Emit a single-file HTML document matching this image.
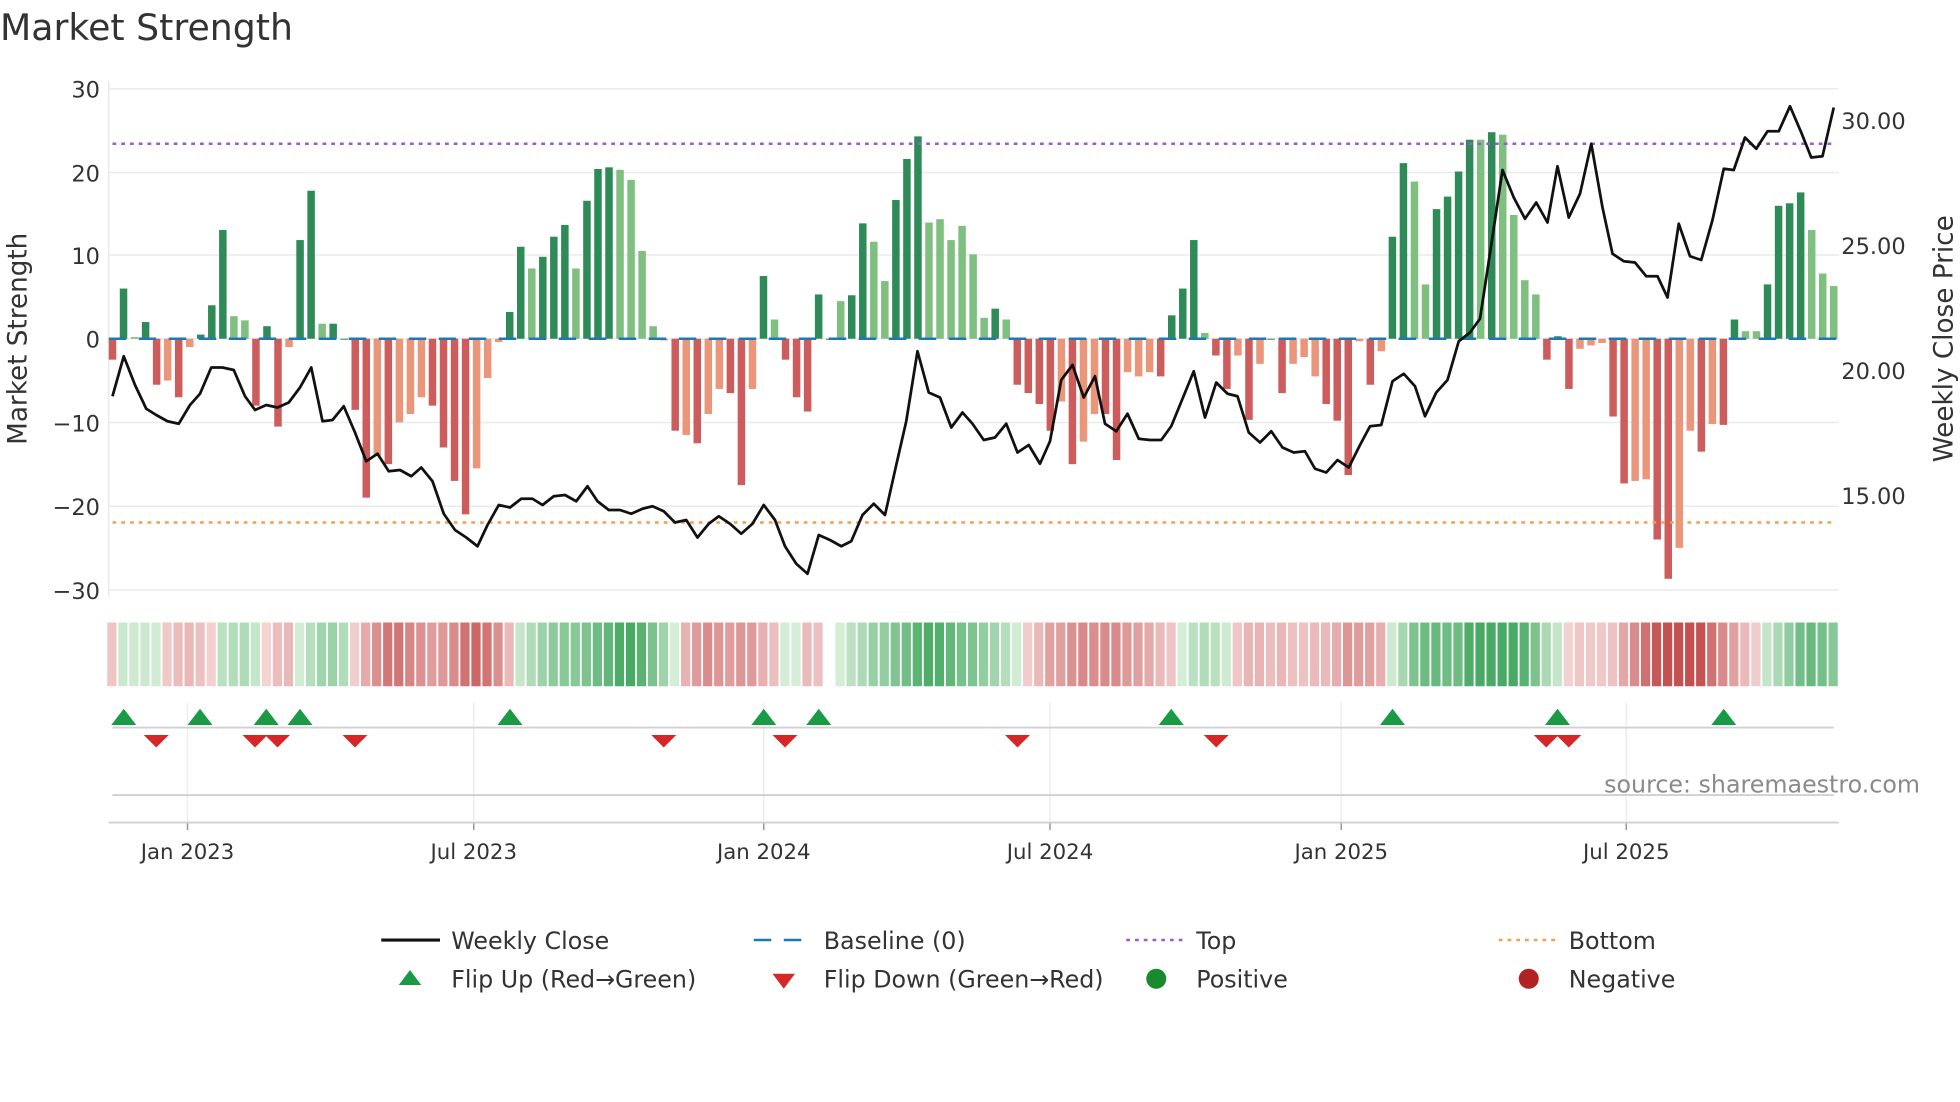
<!DOCTYPE html>
<html><head><meta charset="utf-8"><style>
html,body{margin:0;padding:0;background:#fff;width:1960px;height:1102px;overflow:hidden}
svg{display:block;font-family:"DejaVu Sans","Liberation Sans",sans-serif}
</style></head><body>
<svg id="s" width="1960" height="1102" viewBox="0 0 1568 881.6" xmlns="http://www.w3.org/2000/svg">
<text x="0" y="32" font-size="29" fill="#333">Market Strength</text>
<g id="grid" stroke="#ebebef" stroke-width="1.2"></g>
<line x1="87" y1="65" x2="87" y2="478" stroke="#e4e4e8"/>
<g font-size="18" fill="#333" text-anchor="end">
<text x="80" y="78">30</text><text x="80" y="145">20</text><text x="80" y="211">10</text><text x="80" y="278">0</text>
<text x="80" y="345">−10</text><text x="80" y="412">−20</text><text x="80" y="479">−30</text></g>
<g font-size="18" fill="#333">
<text x="1473" y="103">30.00</text><text x="1473" y="203">25.00</text><text x="1473" y="303">20.00</text><text x="1473" y="403">15.00</text></g>
<text transform="translate(21,271) rotate(-90)" font-size="21" fill="#333" text-anchor="middle">Market Strength</text>
<text transform="translate(1562,271) rotate(-90)" font-size="21" fill="#333" text-anchor="middle">Weekly Close Price</text>
<g id="bars"></g>
<line x1="87" y1="271" x2="1471" y2="271" stroke="#1f77b4" stroke-width="2" stroke-dasharray="14,10"/>
<line x1="90" y1="115" x2="1468" y2="115" stroke="#9b59d6" stroke-width="2" stroke-dasharray="3,4"/>
<line x1="90" y1="418" x2="1468" y2="418" stroke="#f0a050" stroke-width="2" stroke-dasharray="3,4"/>
<polyline id="price" fill="none" stroke="#111" stroke-width="2.2" stroke-linejoin="round"/>
<g id="heat"></g>
<g id="vgrid" stroke="#eceef2" stroke-width="1.2"></g>
<line x1="90" y1="582" x2="1467" y2="582" stroke="#d0d0d0" stroke-width="1.5"/>
<line x1="90" y1="636" x2="1467" y2="636" stroke="#d0d0d0" stroke-width="1.5"/>
<line x1="87" y1="658" x2="1471" y2="658" stroke="#d0d0d0" stroke-width="1.5"/>
<g id="marks"></g>
<text x="1536" y="634" font-size="19" fill="#8a8a8a" text-anchor="end">source: sharemaestro.com</text>
<g font-size="17" fill="#333" text-anchor="middle">
<text x="150" y="687">Jan 2023</text><text x="379" y="687">Jul 2023</text><text x="611" y="687">Jan 2024</text>
<text x="840" y="687">Jul 2024</text><text x="1073" y="687">Jan 2025</text><text x="1301" y="687">Jul 2025</text></g>
<g font-size="19" fill="#333">
<line x1="305" y1="752" x2="352" y2="752" stroke="#111" stroke-width="2.5"/><text x="361" y="759">Weekly Close</text>
<line x1="603" y1="752" x2="649" y2="752" stroke="#1f77b4" stroke-width="2" stroke-dasharray="14,10"/><text x="659" y="759">Baseline (0)</text>
<line x1="901" y1="752" x2="947" y2="752" stroke="#9b59d6" stroke-width="2" stroke-dasharray="3,4"/><text x="957" y="759">Top</text>
<line x1="1199" y1="752" x2="1245" y2="752" stroke="#f0a050" stroke-width="2" stroke-dasharray="3,4"/><text x="1255" y="759">Bottom</text>
<polygon points="319,788 337,788 328,776" fill="#1a9a45"/><text x="361" y="790">Flip Up (Red→Green)</text>
<polygon points="618,779 636,779 627,791" fill="#d62728"/><text x="659" y="790">Flip Down (Green→Red)</text>
<circle cx="925" cy="783" r="8" fill="#1a8a2e"/><text x="957" y="790">Positive</text>
<circle cx="1223" cy="783" r="8" fill="#b22222"/><text x="1255" y="790">Negative</text>
</g>
</svg>
<script>
var NS="http://www.w3.org/2000/svg";
function el(p,t,a){var e=document.createElementNS(NS,t);for(var k in a)e.setAttribute(k,a[k]);document.getElementById(p).appendChild(e);return e;}
[71,138,204,271,338,405,472].forEach(function(y){el("grid","line",{x1:87,x2:1471,y1:y,y2:y});});
[150,379,611,840,1073,1301].forEach(function(x){el("vgrid","line",{x1:x,x2:x,y1:562,y2:658});el("vgrid","line",{x1:x,x2:x,y1:658,y2:664,stroke:"#999"});});
var D="-2.5r 6d 0.2l 2d -5.5r -5s -7r -1s 0.5d 4d 13d 2.7l 2.2l -8r 1.5d -10.5r -1s 11.8d 17.7d 1.8l 1.8d 0d -8.5r -19r -14s -15r -10s -9s -7s -8r -13r -17r -21r -15.5s -4.7s -0.4s 3.2d 11d 8.4l 9.8d 12.2d 13.6d 8.4l 16.5d 20.3d 20.5d 20.2l 19l 10.5l 1.5l -0.2s -11r -11.5s -12.5r -9s -6s -6.5r -17.5r -6s 7.5d 2.3l -2.5r -7r -8.7r 5.3d 0d 4.5l 5.2d 13.8d 11.6l 6.9l 16.6d 21.5d 24.2d 13.9l 14.3l 11.8l 13.5l 10.1l 2.5l 3.6d 2.3l -5.5r -6.5r -7.8r -11r -7.5s -15r -12.3s -9s -9r -14.5r -4s -4.5s -4s -4.5r 2.8d 6d 11.8d 0.7l -2r -6r -2s -9.7r -3s 0d -6.5r -3s -2.2s -4.5s -7.8r -9.8r -16.3r -0.3s -5.5r -1.5s 12.2d 21d 18.8l 6.5l 15.5d 17d 20d 23.8d 23.8l 24.7d 24.4l 14.8l 7l 5.3l -2.5r 0.3d -6r -1.2s -0.8s -0.5s -9.3r -17.3r -17s -16.8s -24r -28.7r -25s -11s -13.5r -10.2s -10.3r 2.3d 0.9l 0.9l 6.5d 15.9d 16.2d 17.5d 13l 7.8l 6.3l".split(" ");
var C={d:"#2e8b57",l:"#7fbf7f",r:"#cd5c5c",s:"#e9967a"};
var N=D.length,x0=90,dx=(1467-90)/(N-1),vals=[];
D.forEach(function(s,i){var v=parseFloat(s),c=C[s.slice(-1)];vals.push(v);var x=x0+i*dx,y=271-v*6.69;
el("bars","rect",{x:x-3,y:Math.min(y,271),width:6,height:Math.max(Math.abs(v*6.69),0.8),fill:c});});
function mix(a,b,t){return "rgb("+a.map(function(v,i){return Math.round(v+(b[i]-v)*t)}).join(",")+")";}
for(var i=0;i<N;i++){var s=0,n=0;for(var j=i-3;j<=i;j++)if(j>=0){s+=vals[j];n++;}var m=s/n;var x=x0+i*dx;
if(x>656&&x<666)continue;
var t=Math.min(Math.abs(m)/20,1),c=m>=0?mix([214,238,216],[72,170,100],t):mix([244,214,214],[196,80,80],t);
el("heat","rect",{x:x-4.2,y:498,width:7.4,height:51,fill:c});}
var P="90,317 99,285 108,308 117,327 125,332 134,337 143,339 152,324 160,315 169,294 178,294 187,296 196,317 204,328 213,324 222,326 231,322 240,310 249,294 258,337 266,336 275,325 284,346 293,369 302,363 311,377 320,376 329,381 337,374 346,385 355,411 364,424 373,430 382,437 390,420 399,404 408,406 417,399 426,399 434,404 443,397 452,396 461,401 470,389 478,401 487,408 496,408 505,411 514,407 522,405 531,409 540,418 549,416 558,430 567,419 575,413 584,419 593,427 602,419 611,404 620,416 628,437 637,451 646,459 655,428 664,432 673,437 681,433 690,412 699,403 708,412 717,372 725,337 734,281 743,314 752,318 761,342 770,330 778,339 787,352 796,350 805,339 814,362 823,356 832,371 840,353 849,304 858,292 867,318 876,301 884,339 893,345 902,331 911,351 920,352 929,352 937,341 946,319 955,297 964,334 973,306 982,315 990,317 999,346 1008,354 1017,345 1026,358 1035,362 1044,361 1052,375 1061,378 1070,368 1079,374 1088,356 1096,341 1105,340 1114,305 1123,299 1132,309 1140,333 1149,314 1158,304 1167,273 1176,266 1184,255 1193,196 1202,136 1211,158 1220,175 1229,162 1238,178 1246,133 1255,174 1264,155 1273,115 1282,166 1290,203 1299,209 1308,210 1317,221 1326,221 1334,238 1343,179 1352,205 1361,208 1370,176 1379,135 1387,136 1396,110 1405,119 1414,105 1423,105 1432,85 1441,106 1449,126 1458,125 1467,86";
document.getElementById("price").setAttribute("points",P);
[99,160,213,240,408,611,655,937,1114,1246,1379].forEach(function(x){el("marks","polygon",{points:(x-10)+",580 "+(x+10)+",580 "+x+",567",fill:"#1a9a45"});});
[125,204,222,284,531,628,814,973,1237,1255].forEach(function(x){el("marks","polygon",{points:(x-10)+",588 "+(x+10)+",588 "+x+",598",fill:"#d62728"});});
</script>
</body></html>
